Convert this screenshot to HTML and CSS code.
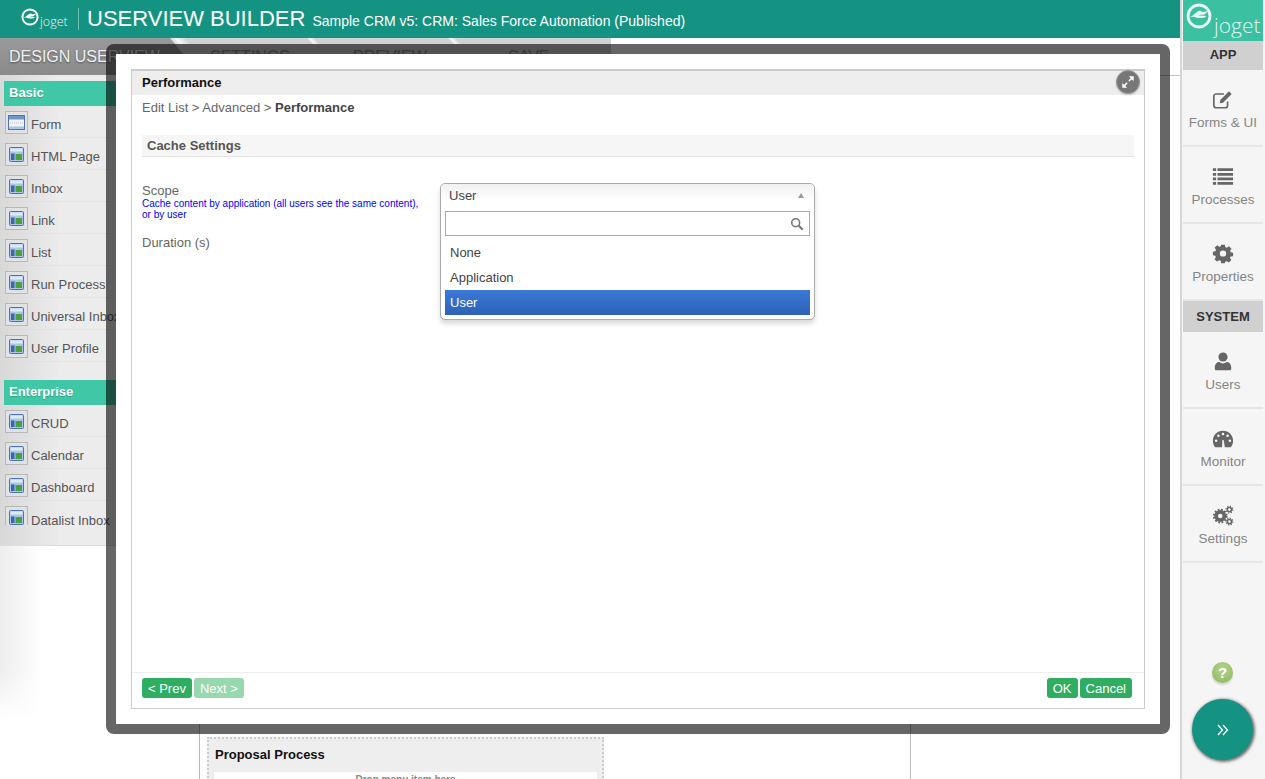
FILE: index.html
```html
<!DOCTYPE html>
<html lang="en">
<head>
<meta charset="utf-8">
<title>Userview Builder</title>
<link rel="stylesheet" href="styles.css">
</head>
<body>
<svg class="defs" width="0" height="0" aria-hidden="true">
  <symbol id="ic-page" viewBox="0 0 23 23">
    <rect x=".5" y=".5" width="22" height="22" fill="#e2e2e2" stroke="#b8b8b8"/>
    <rect x="4.500" y="4.500" width="14" height="14" rx="1" fill="#a9c6ea" stroke="#4d73b4"/>
    <rect x="5.500" y="5.500" width="12" height="3" fill="#dfe9f6"/>
    <rect x="6" y="10.500" width="3.500" height="6.500" fill="#3d66a6"/>
    <rect x="10.500" y="11" width="6.500" height="6" fill="#4aa03c"/>
  </symbol>
  <symbol id="ic-form" viewBox="0 0 23 23">
    <rect x=".5" y=".5" width="22" height="22" fill="#e2e2e2" stroke="#b8b8b8"/>
    <rect x="3.500" y="4.500" width="16" height="14" fill="#f3f3f3" stroke="#4d73b4"/>
    <rect x="4" y="5" width="15" height="3.500" fill="#6f95cf"/>
    <path d="M5 12h13" stroke="#bbb" stroke-dasharray="1 1"/>
    <rect x="4" y="15.500" width="15" height="2.500" fill="#a9c6ea"/>
  </symbol>
  <symbol id="ic-logo" viewBox="0 0 32 32">
    <circle cx="16" cy="16" r="13.500" fill="none" stroke="currentColor" stroke-width="3.500"/>
    <path d="M4 17c5-1 7-5 11-7 2-1 4 0 5 1l7-1-4 4c-3 1-6 0-8 1l10 1c-2 3-8 3-12 2-3-1-6-1-9-1z" fill="currentColor"/>
  </symbol>
</svg>

<div class="app">
  <div class="main">
    <header class="topbar">
      <div class="brand">
        <svg class="brand-mark"><use href="#ic-logo"/></svg>
        <span class="brand-name">joget</span>
      </div>
      <h1 class="title">USERVIEW BUILDER</h1>
      <span class="subtitle">Sample CRM v5: CRM: Sales Force Automation (Published)</span>
    </header>

    <nav class="tabs">
      <span class="tab tab-active">DESIGN USERVIEW</span>
      <span class="tab tab-settings">SETTINGS</span>
      <span class="tab tab-preview">PREVIEW</span>
      <span class="tab tab-save">SAVE</span>
    </nav>

    <div class="workspace">
      <div class="left-col">
        <aside class="palette">
          <h2 class="pal-head">Basic</h2>
          <ul class="pal-list">
            <li class="pal-item"><svg class="pal-ic"><use href="#ic-form"/></svg>Form</li>
            <li class="pal-item"><svg class="pal-ic"><use href="#ic-page"/></svg>HTML Page</li>
            <li class="pal-item"><svg class="pal-ic"><use href="#ic-page"/></svg>Inbox</li>
            <li class="pal-item"><svg class="pal-ic"><use href="#ic-page"/></svg>Link</li>
            <li class="pal-item"><svg class="pal-ic"><use href="#ic-page"/></svg>List</li>
            <li class="pal-item"><svg class="pal-ic"><use href="#ic-page"/></svg>Run Process</li>
            <li class="pal-item"><svg class="pal-ic"><use href="#ic-page"/></svg>Universal Inbox</li>
            <li class="pal-item"><svg class="pal-ic"><use href="#ic-page"/></svg>User Profile</li>
          </ul>
          <h2 class="pal-head pal-head-next">Enterprise</h2>
          <ul class="pal-list">
            <li class="pal-item"><svg class="pal-ic"><use href="#ic-page"/></svg>CRUD</li>
            <li class="pal-item"><svg class="pal-ic"><use href="#ic-page"/></svg>Calendar</li>
            <li class="pal-item"><svg class="pal-ic"><use href="#ic-page"/></svg>Dashboard</li>
            <li class="pal-item pal-item-last"><svg class="pal-ic"><use href="#ic-page"/></svg>Datalist Inbox</li>
          </ul>
        </aside>
        <div class="left-shade"></div>
      </div>
      <section class="canvas">
        <div class="sheet">
          <div class="proc">
            <h3 class="proc-title">Proposal Process</h3>
            <div class="proc-drop">Drop menu item here</div>
          </div>
        </div>
      </section>
    </div>
  </div>

  <aside class="rail">
    <div class="rail-brand">
      <svg class="rail-mark"><use href="#ic-logo"/></svg>
      <span class="rail-name">joget</span>
    </div>
    <div class="rail-sec">APP</div>
    <a class="rail-item">
      <svg class="rail-ic" viewBox="0 0 24 24"><path d="M17 13.500V18a2.500 2.500 0 0 1-2.500 2.500h-10A2.500 2.500 0 0 1 2 18V8a2.500 2.500 0 0 1 2.500-2.500H13" fill="none" stroke="#666" stroke-width="1.800"/><path d="M9 12l9.500-9.500 3 3L12 15l-3.500.5z" fill="#666"/></svg>
      Forms &amp; UI
    </a>
    <a class="rail-item">
      <svg class="rail-ic" viewBox="0 0 24 24"><path d="M1 4h3.500v3H1zM6 4h17v3H6zM1 9h3.500v3H1zM6 9h17v3H6zM1 14h3.500v3H1zM6 14h17v3H6zM1 19h3.500v3H1zM6 19h17v3H6z" transform="translate(0 -1.500)" fill="#666"/></svg>
      Processes
    </a>
    <a class="rail-item">
      <svg class="rail-ic" viewBox="0 0 24 24"><path fill-rule="evenodd" fill="#666" d="M10 3h4l.5 2.700 1.700.7 2.300-1.600 2.800 2.800-1.600 2.300.7 1.700 2.600.4v4l-2.700.5-.7 1.700 1.600 2.300-2.800 2.800-2.300-1.600-1.700.7L14 24h-4l-.5-2.700-1.700-.7-2.300 1.600-2.800-2.800 1.600-2.300-.7-1.700L1 15v-4l2.700-.5.7-1.700-1.600-2.300 2.800-2.800 2.300 1.600 1.700-.7zM12 9.500a3.500 3.500 0 1 0 0 7 3.500 3.500 0 0 0 0-7z" transform="translate(0 -1) scale(1 .96)"/></svg>
      Properties
    </a>
    <div class="rail-sec rail-sec-system">SYSTEM</div>
    <a class="rail-item">
      <svg class="rail-ic" viewBox="0 0 24 24"><circle cx="12" cy="6.500" r="5" fill="#666"/><path d="M5 21c-1.500 0-2-1-2-2.500C3 14 5.500 12 8 12c1 1 2.500 1.500 4 1.500S15 13 16 12c2.500 0 5 2 5 6.500 0 1.500-.5 2.500-2 2.500z" fill="#666"/></svg>
      Users
    </a>
    <a class="rail-item">
      <svg class="rail-ic" viewBox="0 0 24 24"><path fill-rule="evenodd" fill="#666" d="M12 3C5.500 3 1 8 1 14c0 3 1 5.500 2.500 7h17C22 19.500 23 17 23 14c0-6-4.500-11-11-11zM11 21l.3-8h1.400l1.300 8z"/><g fill="#f5f5f5"><circle cx="4.500" cy="14" r="1.400"/><circle cx="7" cy="8.500" r="1.400"/><circle cx="12" cy="6.500" r="1.400"/><circle cx="17" cy="8.500" r="1.400"/><circle cx="19.500" cy="14" r="1.400"/></g></svg>
      Monitor
    </a>
    <a class="rail-item">
      <svg class="rail-ic rail-ic-gears" viewBox="0 0 24 24"><g fill="none" stroke="#666"><circle cx="9" cy="12" r="4.500" stroke-width="4"/><circle cx="9" cy="12" r="7" stroke-width="2" stroke-dasharray="2 1.670"/><circle cx="19" cy="5" r="2.300" stroke-width="1.600"/><circle cx="19" cy="5" r="3.700" stroke-width="1.300" stroke-dasharray="1.400 1.500"/><circle cx="19" cy="18" r="2.300" stroke-width="1.600"/><circle cx="19" cy="18" r="3.700" stroke-width="1.300" stroke-dasharray="1.400 1.500"/></g></svg>
      Settings
    </a>
    <div class="rail-foot">
      <span class="help">?</span>
      <button class="fab" type="button" aria-label="Collapse">
        <svg viewBox="0 0 12 12" width="12" height="12"><path d="M1 1l4.500 5L1 11M6 1l4.500 5L6 11" fill="none" stroke="#fff" stroke-width="1.300"/></svg>
      </button>
    </div>
  </aside>
</div>

<div class="dialog">
  <div class="panel">
    <div class="panel-head">
      <span class="panel-title">Performance</span>
      <span class="expand">
        <svg viewBox="0 0 16 16" width="14" height="14"><path d="M9 1.500h5.500V7zM7 14.500H1.500V9z" fill="#fff"/><path d="M12 4L9 7M4 12l3-3" stroke="#fff" stroke-width="1.800"/></svg>
      </span>
    </div>
    <div class="panel-body">
      <div class="crumbs">Edit List &gt; Advanced &gt; <strong>Performance</strong></div>
      <h4 class="sec-title">Cache Settings</h4>
      <div class="form-grid">
        <div class="field-label">
          <div class="label">Scope</div>
          <div class="hint">Cache content by application (all users see the same content), or by user</div>
        </div>
        <div class="select-cell">
          <div class="chosen">
            <div class="chosen-value">User<span class="chosen-arrow"></span></div>
            <div class="chosen-search">
              <svg viewBox="0 0 16 16" width="14" height="14"><circle cx="6.500" cy="6.500" r="4.500" fill="none" stroke="#777" stroke-width="1.800"/><path d="M10 10l4.500 4.500" stroke="#777" stroke-width="2.400"/></svg>
            </div>
            <ul class="chosen-list">
              <li class="opt">None</li>
              <li class="opt">Application</li>
              <li class="opt opt-on">User</li>
            </ul>
          </div>
        </div>
        <div class="label label-duration">Duration (s)</div>
      </div>
    </div>
    <div class="panel-foot">
      <button class="btn" type="button">&lt; Prev</button>
      <button class="btn btn-off" type="button">Next &gt;</button>
      <span class="foot-gap"></span>
      <button class="btn" type="button">OK</button>
      <button class="btn" type="button">Cancel</button>
    </div>
  </div>
</div>
</body>
</html>
```
FILE: styles.css
```css
* { box-sizing: border-box; }
html, body { margin: 0; height: 100%; }
body {
  width: 1265px;
  height: 779px;
  overflow: hidden;
  background: #fff;
  font-family: "Liberation Sans", Arial, sans-serif;
  color: #555;
  position: relative;
}
.defs { position: absolute; }
.app { display: flex; height: 779px; }
.main { flex: 1; min-width: 0; display: flex; flex-direction: column; }

/* header */
.topbar {
  height: 38px;
  flex: none;
  background: #159382;
  color: #fff;
  display: flex;
  align-items: center;
  padding: 0 0 0 21px;
}
.brand { display: flex; align-items: flex-start; width: 58px; height: 22px; border-right: 1px solid #6dbdb0; margin-right: 8px; }
.brand-mark { width: 18px; height: 18px; color: #fff; }
.brand-name { font: 300 12.500px/1 "Open Sans", sans-serif; margin: 8px 0 0 1px; color: #e6f4f1; }
.title { margin: 0; font-size: 22px; font-weight: 400; }
.subtitle { font-size: 14px; margin: 3px 0 0 7px; }

/* tabs */
.tabs {
  height: 37px;
  width: 611px;
  flex: none;
  display: flex;
  align-items: center;
  background: linear-gradient(#d4d4d4, #bbb);
  font-size: 16px;
  color: #888;
  position: relative;
}
.tab-active {
  background: linear-gradient(#9a9a9a, #8a8a8a);
  color: #f0f0f0;
  text-shadow: 0 1px 2px rgba(0, 0, 0, .45);
  align-self: stretch;
  display: flex;
  align-items: center;
  padding: 0 0 0 9px;
  width: 200px;
  white-space: nowrap;
  clip-path: polygon(0 0, 85% 0, 100% 100%, 0 100%);
}
.tab-settings { margin-left: 10px; width: 143px; }
.tab-preview { width: 155px; }
.tab-settings::before, .tab-preview::before, .tab-save::before {
  content: "";
  position: absolute;
  top: 0;
  width: 12px;
  height: 6px;
  background: linear-gradient(90deg, transparent, rgba(255, 255, 255, .85) 25%, transparent 70%);
  transform: skewX(42deg);
}
.tab-settings::before { left: 172px; width: 24px; }
.tab-preview::before { left: 309px; }
.tab-save::before { left: 450px; }

/* palette */
.workspace { flex: 1; display: flex; min-height: 0; }
.left-col { width: 199px; flex: none; display: flex; flex-direction: column; }
.palette {
  height: 471px;
  flex: none;
  padding: 6px 0 0 4px;
  background: linear-gradient(90deg, #d8d8d8, #ececec 60px);
  border-bottom: 1px solid #ddd;
  overflow: hidden;
}
.left-shade {
  width: 42px;
  height: 175px;
  background: linear-gradient(90deg, #ededed, #fff);
  -webkit-mask-image: linear-gradient(#000 70%, transparent);
  mask-image: linear-gradient(#000 70%, transparent);
}
.pal-head {
  margin: 0;
  height: 25px;
  background: #40c8a6;
  color: #fff;
  font-size: 13px;
  line-height: 23px;
  padding-left: 5px;
  font-weight: 700;
  text-shadow: 0 1px 1px rgba(0, 0, 0, .2);
}
.pal-head-next { margin-top: 18px; }
.pal-list { list-style: none; margin: 0; padding: 0; }
.pal-item {
  height: 32px;
  display: flex;
  align-items: center;
  gap: 3px;
  padding: 6px 0 0 1px;
  font-size: 13px;
  color: #555;
  white-space: nowrap;
  border-bottom: 1px dotted #dcdcdc;
}
.pal-ic { width: 23px; height: 23px; flex: none; margin-top: -5px; }
.pal-item-last { border-bottom: 0; }
.pal-item-last .pal-ic { clip-path: inset(0 0 4px 0); }

/* canvas */
.canvas { flex: 1; min-width: 0; border-top: 1px solid #c4c4c4; }
.sheet {
  width: 712px;
  height: 100%;
  border-left: 1px solid #bbb;
  border-right: 1px solid #bbb;
  padding: 661px 0 0 7px;
}
.proc {
  width: 397px;
  background: #eee;
  border: 2px dotted #ccc;
  padding: 7px 5px 0;
}
.proc-title { margin: 0 0 8px 1px; font-size: 13px; color: #111; line-height: 18px; }
.proc-drop { background: #fff; text-align: center; font-size: 10px; font-weight: 700; color: #888; height: 24px; line-height: 11px; padding-top: 2px; }

/* rail */
.rail {
  width: 85px;
  flex: none;
  background: #f5f5f5;
  border-left: 2px solid #d6d6d6;
  padding-right: 2px;
  display: flex;
  flex-direction: column;
}
.rail-brand {
  height: 41px;
  flex: none;
  margin-left: 1px;
  background: #3bc0a2;
  color: #fff;
  display: flex;
  align-items: flex-start;
  padding: 3px 0 0 3px;
}
.rail-mark { width: 26px; height: 26px; color: #e8f7f3; flex: none; }
.rail-name { font: 300 21px/1 "Open Sans", sans-serif; margin: 12px 0 0 2px; color: #e4f5f1; }
.rail-sec {
  height: 29px;
  flex: none;
  margin-left: 1px;
  background: #d0d0d0;
  color: #333;
  font-size: 13px;
  font-weight: 700;
  text-align: center;
  line-height: 27px;
}
.rail-sec-system { height: 31px; line-height: 31px; }
.rail-item {
  height: 77px;
  flex: none;
  margin-left: 1px;
  border-bottom: 2px solid #e6e6e6;
  display: flex;
  flex-direction: column;
  align-items: center;
  padding-top: 19px;
  font-size: 13.500px;
  color: #858585;
  gap: 4px;
}
.rail-ic { width: 22px; height: 22px; flex: none; }
.rail-foot { flex: 1; display: flex; flex-direction: column; align-items: center; justify-content: flex-end; padding-bottom: 19px; }
.help {
  width: 21px;
  height: 21px;
  border-radius: 50%;
  background: radial-gradient(circle at 50% 35%, #b6d48a, #8cb55e);
  box-shadow: 0 2px 2px rgba(0, 0, 0, .15);
  color: #fff;
  font-weight: 700;
  font-size: 15px;
  line-height: 21px;
  text-align: center;
  margin-bottom: 16px;
}
.fab {
  width: 61px;
  height: 61px;
  border: 0;
  border-radius: 50%;
  padding: 0;
  background: #159382;
  display: flex;
  align-items: center;
  justify-content: center;
  box-shadow: 1px 1px 3px 1px rgba(0, 0, 0, .55);
}

/* dialog */
.dialog {
  position: absolute;
  left: 106px;
  top: 44px;
  width: 1064px;
  height: 690px;
  border: 10px solid rgba(0, 0, 0, .6);
  border-radius: 8px;
  background: #fff;
  background-clip: padding-box;
  padding: 15px;
}
.panel {
  height: 100%;
  border: 1px solid #ccc;
  border-top-width: 2px;
  display: flex;
  flex-direction: column;
  position: relative;
}
.panel-head { height: 24px; flex: none; background: #eee; padding: 0 0 2px 10px; display: flex; align-items: center; }
.panel-title { color: #111; font-size: 13px; font-weight: 700; }
.expand {
  position: absolute;
  right: 4px;
  top: -1px;
  width: 24px;
  height: 24px;
  border-radius: 50%;
  background: #777;
  border: 1px solid #999;
  box-shadow: 0 1px 2px rgba(0, 0, 0, .2);
  display: flex;
  align-items: center;
  justify-content: center;
}
.panel-body { flex: 1; padding: 0 10px; min-height: 0; }
.crumbs { font-size: 13px; line-height: 16px; margin-top: 5px; color: #666; }
.crumbs strong { color: #444; }
.sec-title {
  margin: 19px 0 0;
  height: 22px;
  background: #f6f6f6;
  border-bottom: 1px solid #e2e2e2;
  color: #555;
  font-size: 13px;
  line-height: 22px;
  padding-left: 5px;
}
.form-grid { display: grid; grid-template-columns: 298px 375px; align-items: start; padding-top: 26px; }
.field-label { grid-column: 1; grid-row: 1; }
.label { font-size: 13px; line-height: 15px; color: #666; }
.hint { font-size: 10px; line-height: 11px; color: #00f; width: 285px; }
.label-duration { grid-column: 1; grid-row: 2; margin-top: 15px; }

.select-cell { grid-column: 2; grid-row: 1; position: relative; }
.chosen {
  position: absolute;
  left: 0;
  top: 0;
  width: 375px;
  height: 137px;
  border: 1px solid #aaa;
  border-radius: 5px;
  background: #fff;
  box-shadow: 0 4px 5px rgba(0, 0, 0, .15);
  font-size: 13px;
  color: #444;
}
.chosen-value {
  height: 24px;
  padding-left: 8px;
  line-height: 24px;
  background: linear-gradient(#f0f0f0, #fff 70%);
  border-radius: 5px 5px 0 0;
  position: relative;
}
.chosen-arrow {
  position: absolute;
  right: 10px;
  top: 9px;
  border: 3px solid transparent;
  border-top: 0;
  border-bottom: 5px solid #999;
}
.chosen-search {
  height: 25px;
  margin: 3px 4px 0;
  border: 1px solid #aaa;
  display: flex;
  align-items: center;
  justify-content: flex-end;
  padding-right: 5px;
}
.chosen-list { list-style: none; margin: 4px 4px 0; padding: 0; }
.opt { height: 25px; line-height: 25px; padding-left: 5px; }
.opt-on {
  color: #fff;
  background: linear-gradient(#3b78d8, #2d62b6);
}

.panel-foot {
  height: 36px;
  flex: none;
  border-top: 1px solid #eee;
  padding: 5px 12px 0 10px;
  display: flex;
  align-items: flex-start;
  gap: 2px;
}
.foot-gap { flex: 1; }
.btn {
  height: 20px;
  padding: 1px 6px 0;
  border: 0;
  border-radius: 3px;
  background: #2fae62;
  color: #fff;
  font: 13px/19px "Liberation Sans", sans-serif;
}
.btn-off { background: #97d8ae; }
```
